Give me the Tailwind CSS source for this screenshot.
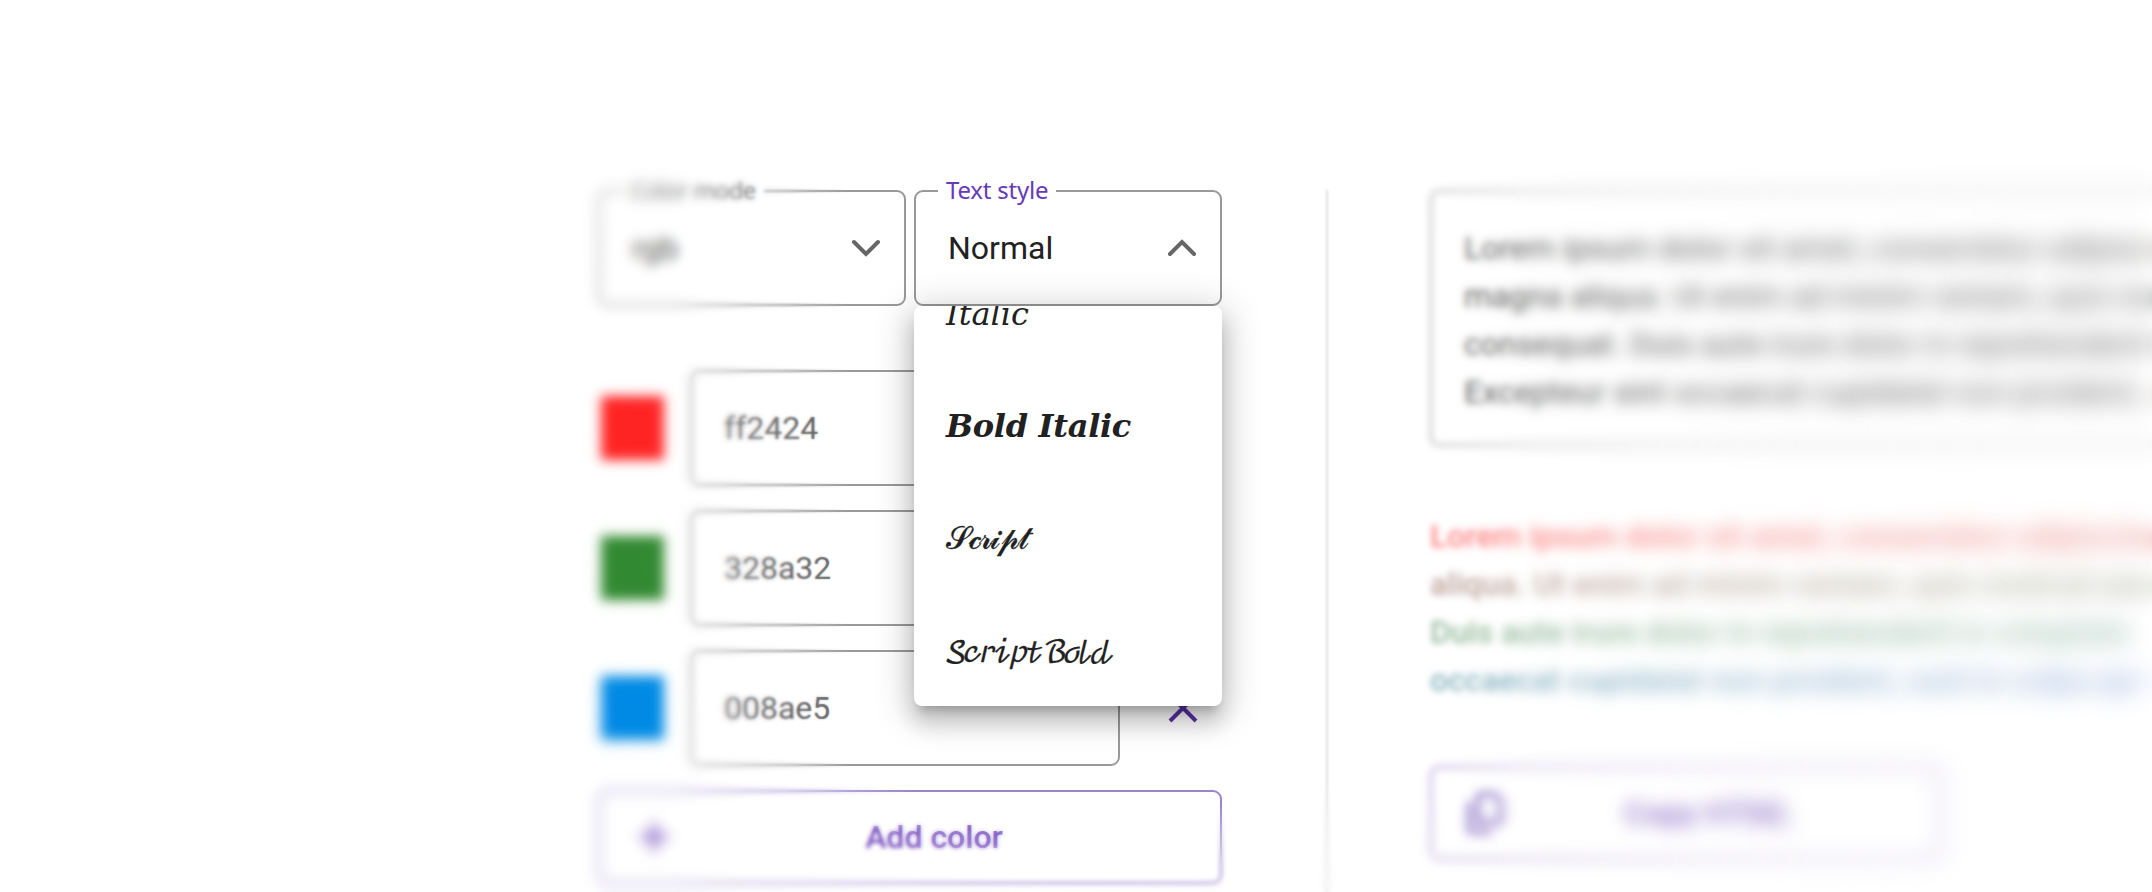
<!DOCTYPE html>
<html lang="en">
<head>
<meta charset="utf-8">
<title>Text color generator</title>
<script src="https://cdn.jsdelivr.net/npm/@tailwindcss/browser@4"></script>
</head>
<body class="relative h-[892px] w-[2152px] overflow-hidden bg-white font-['Roboto',sans-serif] text-[32px] leading-[48px] text-[#212121]">
<main class="flex h-[892px] pt-[190px] pl-[598px]">
  <!-- Controls -->
  <section class="w-[624px] shrink-0">
    <div class="flex gap-2">
      <div class="relative flex h-[116px] w-[308px] items-center justify-between rounded-[9px] border-2 border-[#999] pr-[22px] pl-[32px]">
        <span class="absolute -top-[18px] left-[22px] bg-white px-2 font-['Noto_Sans',sans-serif] text-[24px] leading-[32px] tracking-[-0.6px] text-[#777]">Color mode</span>
        <span class="text-[#555]">rgb</span>
        <svg class="h-8 w-8" viewBox="0 0 32 32" fill="none" stroke="#666" stroke-width="4" stroke-linecap="round"><path d="M4 10L16 22L28 10"/></svg>
      </div>
      <div class="relative flex h-[116px] w-[308px] items-center justify-between rounded-[9px] border-2 border-[#999] pr-[22px] pl-[32px]">
        <span class="absolute -top-[18px] left-[22px] bg-white px-2 font-['Noto_Sans',sans-serif] text-[24px] leading-[32px] tracking-[-0.2px] text-[#673ab7]">Text style</span>
        <span>Normal</span>
        <svg class="h-8 w-8" viewBox="0 0 32 32" fill="none" stroke="#666" stroke-width="4" stroke-linecap="round"><path d="M4 22L16 10L28 22"/></svg>
        <!-- Open option list -->
        <div class="absolute top-[114px] -left-[2px] z-10 flex h-[400px] w-[308px] flex-col overflow-hidden rounded-[8px] bg-white pl-8 text-[32px] shadow-[0_10px_10px_-6px_rgba(0,0,0,0.2),0_16px_20px_2px_rgba(0,0,0,0.14),0_6px_36px_6px_rgba(0,0,0,0.18)]">
          <div class="-mt-[48px] flex h-[112px] shrink-0 items-center font-['DejaVu_Serif',serif]">𝐼𝑡𝑎𝑙𝑖𝑐</div>
          <div class="flex h-[112px] shrink-0 items-center font-['DejaVu_Serif',serif] font-bold tracking-[-0.3px] italic">Bold Italic</div>
          <div class="flex h-[112px] shrink-0 items-center tracking-[-2.4px] [-webkit-text-stroke:0.3px_#212121]">𝒮𝒸𝓇𝒾𝓅𝓉</div>
          <div class="-ml-[2px] flex h-[112px] shrink-0 items-center pt-[6px] font-['DejaVu_Math_TeX_Gyre',serif] text-[30px] tracking-[-4.8px] [word-spacing:-1px] [-webkit-text-stroke:0.3px_#212121]">𝒮𝒸𝓇𝒾𝓅𝓉 ℬℴ𝓁𝒹</div>
        </div>
      </div>
    </div>
    <div class="mt-16 flex flex-col gap-6">
      <div class="flex items-center">
        <div class="ml-[3px] h-16 w-[63px] bg-[#ff2424]"></div>
        <div class="ml-[26px] flex h-[116px] w-[430px] items-center rounded-[9px] border-2 border-[#999] pl-8 text-[#666]">ff2424</div>
        <svg class="ml-[47px] h-8 w-8" viewBox="0 0 32 32" fill="none" stroke="#512da8" stroke-width="4"><path d="M3 3L29 29M29 3L3 29"/></svg>
      </div>
      <div class="flex items-center">
        <div class="ml-[3px] h-16 w-[63px] bg-[#328a32]"></div>
        <div class="ml-[26px] flex h-[116px] w-[430px] items-center rounded-[9px] border-2 border-[#999] pl-8 text-[#666]">328a32</div>
        <svg class="ml-[47px] h-8 w-8" viewBox="0 0 32 32" fill="none" stroke="#512da8" stroke-width="4"><path d="M3 3L29 29M29 3L3 29"/></svg>
      </div>
      <div class="flex items-center">
        <div class="ml-[3px] h-16 w-[63px] bg-[#008ae5]"></div>
        <div class="ml-[26px] flex h-[116px] w-[430px] items-center rounded-[9px] border-2 border-[#999] pl-8 text-[#666]">008ae5</div>
        <svg class="ml-[47px] h-8 w-8" viewBox="0 0 32 32" fill="none" stroke="#5a30a8" stroke-width="4"><path d="M3 3L29 29M29 3L3 29"/></svg>
      </div>
    </div>
    <button class="mt-6 flex h-[94px] w-full items-center rounded-[9px] border-2 border-[#9a86cc] font-medium text-[#7a52c0]">
      <svg class="ml-[38px] h-8 w-8" viewBox="0 0 32 32" fill="none" stroke="#673ab7" stroke-width="4"><path d="M16 2V30M2 16H30"/></svg>
      <span class="flex-1 pr-[22px] text-center">Add color</span>
    </button>
  </section>
  <div class="ml-[104px] w-[2px] shrink-0 bg-[#dedede]"></div>
  <!-- Input and coloured preview -->
  <section class="ml-[102px] w-[722px] shrink-0 overflow-hidden whitespace-nowrap">
    <div class="h-[256px] rounded-l-[9px] border-2 border-r-0 border-[#aaa] pt-8 pl-8 text-[#5c5c5c]">
      Lorem ipsum dolor sit amet, consectetur adipiscing<br>magna aliqua. Ut enim ad minim veniam, quis no<br>consequat. Duis aute irure dolor in reprehenderit<br>Excepteur sint occaecat cupidatat non proident, sunt
    </div>
    <div class="mt-[66px] font-medium opacity-60">
      <div class="w-fit bg-linear-to-r from-[#ff2424] to-[#d8473c] bg-clip-text text-transparent">Lorem ipsum dolor sit amet, consectetur adipiscing</div>
      <div class="w-fit bg-linear-to-r from-[#946557] to-[#6a7550] bg-clip-text text-transparent">aliqua. Ut enim ad minim veniam, quis nostrud exe</div>
      <div class="w-fit bg-linear-to-r from-[#4a8a50] to-[#4a8a70] bg-clip-text text-transparent">Duis aute irure dolor in reprehenderit in voluptate</div>
      <div class="w-fit bg-linear-to-r from-[#347f92] to-[#4a78c8] bg-clip-text text-transparent">occaecat cupidatat non proident, sunt in culpa qui</div>
    </div>
    <button class="mt-[62px] flex h-[94px] w-[512px] items-center rounded-[9px] border-2 border-[#a08cd0] font-medium text-[#8a6cc6]">
      <svg class="ml-[34px] h-[44px] w-[38px]" viewBox="0 0 38 44" fill="none" stroke="#7a5fbb" stroke-width="4" stroke-linejoin="round"><path d="M16 3H28L35 10V31H12V7Q12 3 16 3Z"/><path d="M3 11V37Q3 41 7 41H26"/></svg>
      <span class="flex-1 pr-[28px] text-center">Copy HTML</span>
    </button>
  </section>
</main>
<!-- Depth of field: each layer adds blur further from the focus area -->
<div class="pointer-events-none absolute inset-0 z-20 backdrop-blur-[1px] [mask-image:linear-gradient(to_right,black_790px,transparent_850px)]"></div>
<div class="pointer-events-none absolute inset-0 z-20 backdrop-blur-[2px] [mask-image:linear-gradient(to_right,black_720px,transparent_800px)]"></div>
<div class="pointer-events-none absolute inset-0 z-20 backdrop-blur-[3px] [mask-image:linear-gradient(to_right,black_670px,transparent_750px)]"></div>
<div class="pointer-events-none absolute inset-0 z-20 backdrop-blur-[4px] [mask-image:linear-gradient(to_right,black_670px,transparent_710px)]"></div>
<div class="pointer-events-none absolute inset-0 z-20 backdrop-blur-[2px] [mask-image:radial-gradient(590px_440px_at_1090px_470px,transparent_79%,black_92%)]"></div>
<div class="pointer-events-none absolute inset-0 z-20 backdrop-blur-[3px] [mask-image:radial-gradient(590px_440px_at_1090px_470px,transparent_92%,black_105%)]"></div>
<div class="pointer-events-none absolute inset-0 z-20 backdrop-blur-[1px] [mask-image:linear-gradient(to_right,transparent_1240px,black_1320px)]"></div>
<div class="pointer-events-none absolute inset-0 z-20 backdrop-blur-[3px] [mask-image:linear-gradient(to_right,transparent_1350px,black_1430px)]"></div>
<div class="pointer-events-none absolute inset-0 z-20 backdrop-blur-[4px] [mask-image:linear-gradient(to_right,transparent_1430px,black_1540px)]"></div>
<div class="pointer-events-none absolute inset-0 z-20 backdrop-blur-[6px] [mask-image:linear-gradient(to_right,transparent_1490px,black_1640px)]"></div>
<div class="pointer-events-none absolute inset-0 z-20 backdrop-blur-[7px] [mask-image:linear-gradient(to_right,transparent_1640px,black_1820px)]"></div>
<div class="pointer-events-none absolute inset-0 z-20 backdrop-blur-[6px] [mask-image:linear-gradient(to_right,transparent_1820px,black_2050px)]"></div>
</body>
</html>
